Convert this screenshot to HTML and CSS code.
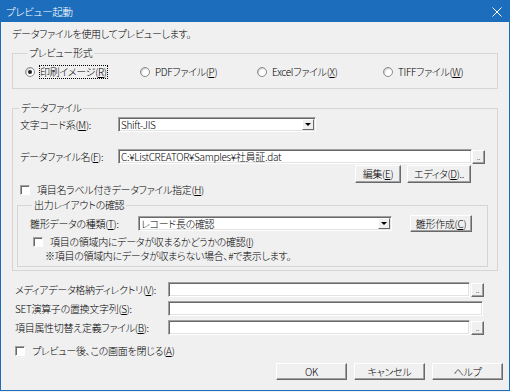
FILE: index.html
```html
<!DOCTYPE html>
<html lang="ja">

<head>
    <meta charset="UTF-8">
    <meta name="viewport" content="width=device-width, initial-scale=1.0">
    <link rel="stylesheet" href="styles.css">
    <title>プレビュー起動</title>
</head>

<body>
    <div class="window">
        <div class="titlebar">
            <span class="title">プレビュー起動</span>
            <svg class="close" width="10" height="10" viewBox="0 0 10 10">
                <path d="M0.5 0.5L9.5 9.5M9.5 0.5L0.5 9.5" stroke="#fff" stroke-width="1" />
            </svg>
        </div>

        <div class="content">
            <div class="intro">データファイルを使用してプレビューします。</div>

            <fieldset class="group format">
                <legend>プレビュー形式</legend>
                <div class="radios">
                    <div class="radio"><span class="dot checked"></span><span class="focus">印刷イメージ(<u>R</u>)</span></div>
                    <div class="radio"><span class="dot"></span><span>PDFファイル(<u>P</u>)</span></div>
                    <div class="radio"><span class="dot"></span><span>Excelファイル(<u>X</u>)</span></div>
                    <div class="radio"><span class="dot"></span><span>TIFFファイル(<u>W</u>)</span></div>
                </div>
            </fieldset>

            <fieldset class="group datafile">
                <legend>データファイル</legend>
                <div class="row row-code">
                    <span class="label">文字コード系(<u>M</u>):</span>
                    <div class="field select code-select">
                        <span class="value">Shift-JIS</span>
                        <span class="arrow"></span>
                    </div>
                </div>
                <div class="row row-file">
                    <span class="label">データファイル名(<u>F</u>):</span>
                    <div class="field file-input"><span class="value">C:¥ListCREATOR¥Samples¥社員証.dat</span></div>
                    <div class="btn browse">..</div>
                </div>
                <div class="row row-edit">
                    <div class="btn edit">編集(<u>E</u>)</div>
                    <div class="btn editor">エディタ(<u>D</u>)..</div>
                </div>
                <div class="row check-row label-check">
                    <span class="box"></span>
                    <span>項目名ラベル付きデータファイル指定(<u>H</u>)</span>
                </div>

                <fieldset class="group layout">
                    <legend>出力レイアウトの確認</legend>
                    <div class="row row-template">
                        <span class="label">雛形データの種類(<u>T</u>):</span>
                        <div class="field select template-select">
                            <span class="value">レコード長の確認</span>
                            <span class="arrow"></span>
                        </div>
                        <div class="btn make">雛形作成(<u>C</u>)</div>
                    </div>
                    <div class="row check-row">
                        <span class="box"></span>
                        <span>項目の領域内にデータが収まるかどうかの確認(<u>I</u>)</span>
                    </div>
                    <div class="row note">※項目の領域内にデータが収まらない場合、#で表示します。</div>
                </fieldset>
            </fieldset>

            <div class="row path-row first">
                <span class="label">メディアデータ格納ディレクトリ(<u>V</u>):</span>
                <div class="field path-input"></div>
                <div class="btn browse">..</div>
            </div>
            <div class="row path-row">
                <span class="label">SET演算子の置換文字列(<u>S</u>):</span>
                <div class="field path-input wide"></div>
            </div>
            <div class="row path-row">
                <span class="label">項目属性切替え定義ファイル(<u>B</u>):</span>
                <div class="field path-input"></div>
                <div class="btn browse">..</div>
            </div>

            <div class="row check-row close-check">
                <span class="box"></span>
                <span>プレビュー後、この画面を閉じる(<u>A</u>)</span>
            </div>

            <div class="actions">
                <div class="btn action">OK</div>
                <div class="btn action">キャンセル</div>
                <div class="btn action">ヘルプ</div>
            </div>
        </div>
    </div>
</body>

</html>
```

FILE: styles.css
```css
body {
    margin: 0;
    background: #f0f0f0;
    font-family: "Noto Sans CJK JP", sans-serif;
    font-size: 10px;
    font-weight: 300;
    letter-spacing: -0.3px;
    font-feature-settings: "palt";
    color: #000;
}

u {
    text-decoration-thickness: 1px;
    text-underline-offset: 1px;
}

.window {
    width: 510px;
    height: 391px;
    box-sizing: border-box;
    border: 1px solid #1c6ebc;
    background: #f0f0f0;
    display: flex;
    flex-direction: column;
}

.titlebar {
    height: 21px;
    flex: none;
    background: #1c6ebc;
    color: #fff;
    font-size: 10.5px;
    display: flex;
    align-items: center;
    justify-content: space-between;
    padding: 0 7px 0 5px;
}

.close {
    display: block;
}

.content {
    flex: 1;
    padding: 0 6px 0 11px;
    line-height: 12px;
    white-space: nowrap;
}

.intro {
    margin-top: 6px;
}

/* group boxes */
.group {
    margin: 0 5px 0 0;
    min-width: 0;
    border: 1px solid #d5d5d5;
    padding: 0;
}

.group legend {
    padding: 0 2px;
    margin-left: 2px;
    line-height: 12px;
}

.format {
    margin-top: 7px;
    padding: 7px 0 10px 12px;
}

.radios {
    display: grid;
    grid-template-columns: 115px 117px 126px auto;
}

.radio {
    display: flex;
    align-items: center;
    gap: 5px;
}

.dot {
    width: 10px;
    height: 10px;
    box-sizing: border-box;
    border-radius: 50%;
    border: 1px solid #8a8a8a;
    background: #fff;
    box-shadow: inset 1px 1px 1px #c8c8c8;
    display: flex;
    align-items: center;
    justify-content: center;
}

.dot.checked::after {
    content: "";
    width: 4px;
    height: 4px;
    border-radius: 50%;
    background: #202020;
}

.focus {
    outline: 1px dotted #000;
    outline-offset: 0;
}

.datafile {
    margin-top: 13px;
    padding: 0 9px 3px 4px;
}

.row {
    display: flex;
    align-items: center;
}

.label {
    flex: none;
}

/* sunken fields */
.field {
    height: 15px;
    box-sizing: border-box;
    background: #fff;
    border: 1px solid;
    border-color: #a0a0a0 #fff #fff #a0a0a0;
    box-shadow: inset 1px 1px #696969, inset -1px -1px #e3e3e3;
    display: flex;
    align-items: center;
    padding-left: 2px;
    overflow: hidden;
}

.select {
    justify-content: space-between;
    padding-right: 1px;
}

.arrow {
    width: 12px;
    height: 11px;
    box-sizing: border-box;
    background: #f0f0f0;
    border: 1px solid;
    border-color: #fff #696969 #696969 #fff;
    display: flex;
    align-items: center;
    justify-content: center;
}

.arrow::after {
    content: "";
    border-left: 3px solid transparent;
    border-right: 3px solid transparent;
    border-top: 3px solid #000;
}

/* raised buttons */
.btn {
    box-sizing: border-box;
    background: #f0f0f0;
    border: 1px solid;
    border-color: #fff #696969 #696969 #fff;
    box-shadow: inset -1px -1px #a0a0a0;
    display: flex;
    align-items: center;
    justify-content: center;
}

.browse {
    width: 13px;
    height: 14px;
    font-size: 8px;
    align-items: flex-end;
    padding-bottom: 3px;
    line-height: 6px;
}

.row-code {
    margin: 3px 0 0 3px;
}

.row-code .label {
    width: 98px;
}

.code-select {
    width: 198px;
}

.row-file {
    margin: 17px 0 0 3px;
}

.row-file .label {
    width: 98px;
}

.file-input {
    width: 354px;
}

.row-edit {
    margin-top: 1px;
    justify-content: flex-end;
    gap: 6px;
    padding-right: 17px;
}

.edit {
    width: 46px;
    height: 18px;
}

.editor {
    width: 64px;
    height: 18px;
}

.check-row {
    gap: 7px;
}

.box {
    width: 10px;
    height: 10px;
    box-sizing: border-box;
    background: #fff;
    border: 1px solid;
    border-color: #a0a0a0 #fff #fff #a0a0a0;
    box-shadow: inset 1px 1px #696969;
}

.label-check {
    margin: 1px 0 0 3px;
}

.layout {
    margin: 3px 0 0 0;
    padding: 0 0 4px 12px;
}

.row-template {
    margin-top: 4px;
}

.row-template .label {
    width: 108px;
}

.template-select {
    width: 254px;
}

.make {
    width: 62px;
    height: 17px;
    margin-left: 18px;
}

.layout .check-row {
    margin: 4px 0 0 3px;
}

.note {
    margin: 2px 0 0 15px;
}

.path-row {
    margin-top: 4px;
    padding-left: 3px;
}

.path-row.first {
    margin-top: 11px;
}

.path-row .label {
    width: 153px;
}

.path-input {
    width: 302px;
}

.path-input.wide {
    width: 315px;
}

.path-row .browse {
    margin-left: 1px;
}

.close-check {
    margin: 10px 0 0 3px;
}

.actions {
    margin-top: 6px;
    display: flex;
    justify-content: flex-end;
    gap: 7px;
}

.action {
    width: 71px;
    height: 17px;
}
```
